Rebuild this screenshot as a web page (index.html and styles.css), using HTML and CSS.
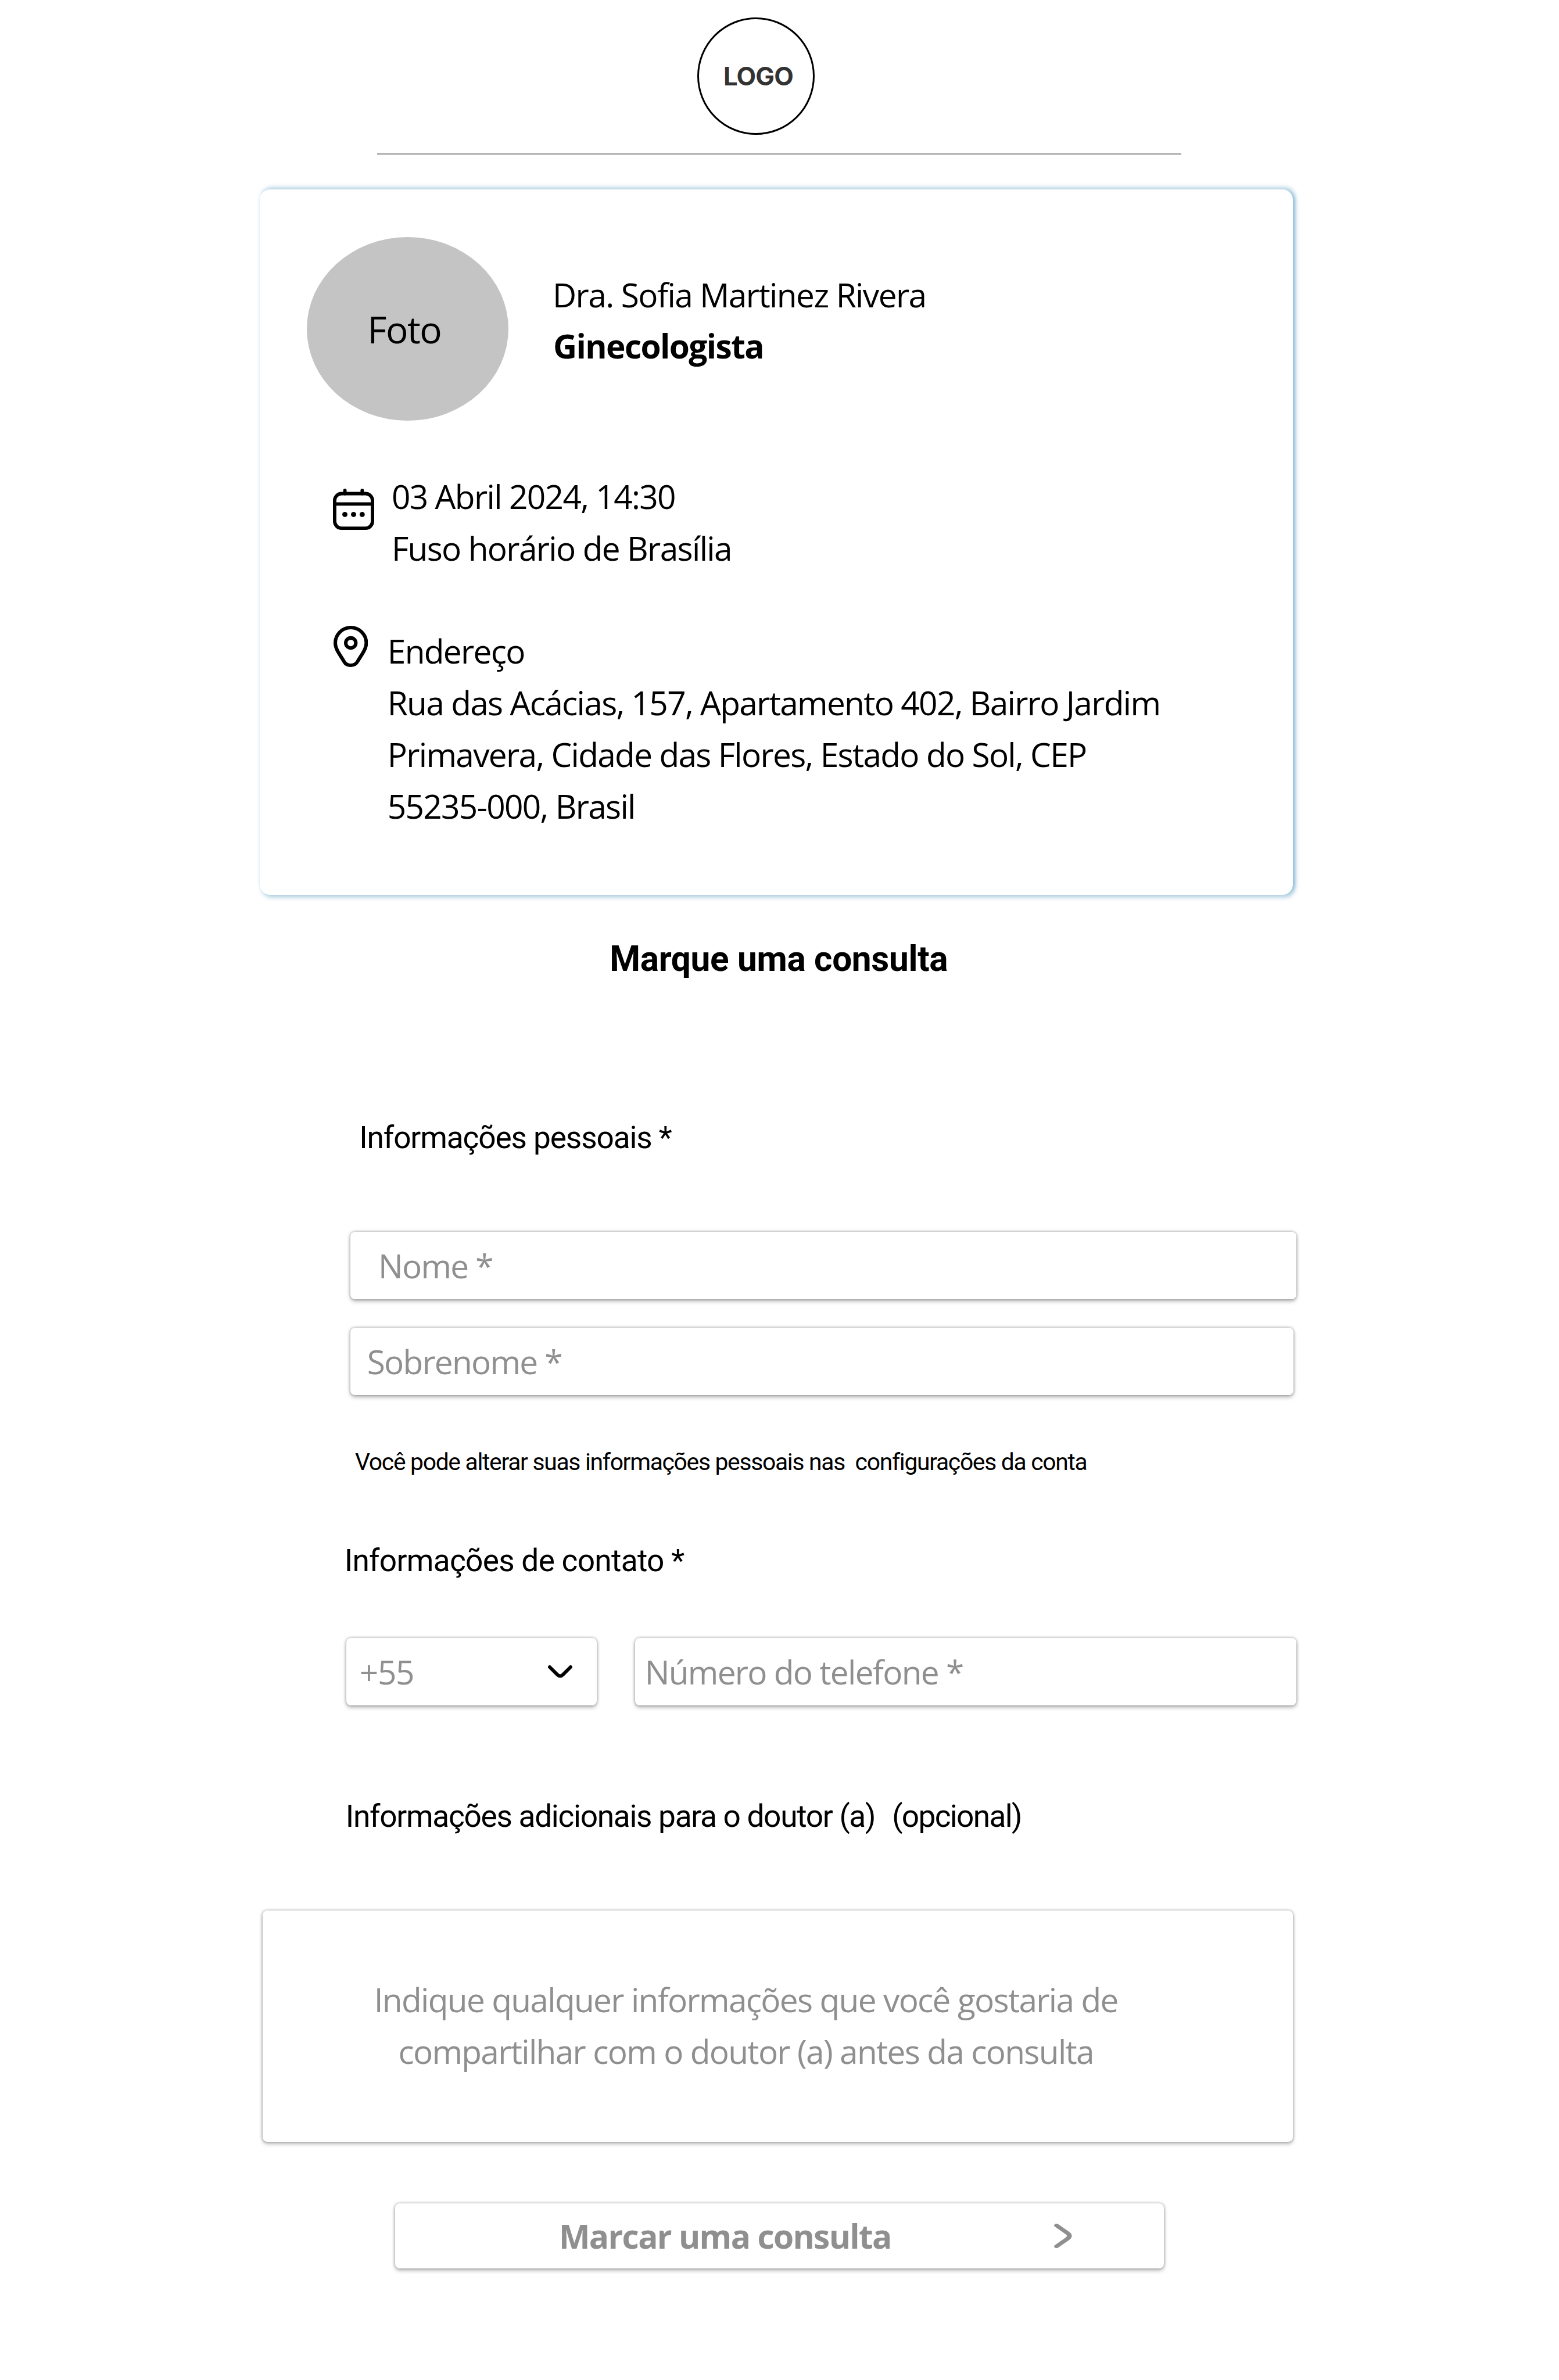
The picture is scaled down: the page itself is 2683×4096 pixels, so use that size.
FILE: index.html
```html
<!DOCTYPE html>
<html lang="pt-BR">
<head>
<meta charset="utf-8">
<title>Marque uma consulta</title>
<link rel="stylesheet" href="styles.css">
</head>
<body>
<header class="header">
  <div class="logo">LOGO</div>
  <hr class="divider">
</header>

<main class="page">
  <section class="card">
    <div class="doctor">
      <div class="avatar">Foto</div>
      <div class="doctor-info">
        <p class="t-name">Dra. Sofia Martinez Rivera</p>
        <p class="t-role">Ginecologista</p>
      </div>
    </div>
    <div class="detail detail-date">
      <svg class="icon-calendar" viewBox="0 0 80 80" fill="none" stroke="#000" stroke-width="6.6" stroke-linecap="round">
        <rect x="3.3" y="9.6" width="73.4" height="67.1" rx="13.5"/>
        <path d="M3.3 29.7H76.7M23.2 3.3V9.6M56.7 3.3V9.6"/>
        <g fill="#000" stroke="none"><circle cx="23.1" cy="50" r="5"/><circle cx="40" cy="50" r="5"/><circle cx="56.7" cy="50" r="5"/></g>
      </svg>
      <div>
        <p class="t-date">03 Abril 2024, 14:30</p>
        <p class="t-zone">Fuso horário de Brasília</p>
      </div>
    </div>
    <div class="detail detail-address">
      <svg class="icon-pin" viewBox="0 0 67 80" fill="none" stroke="#000" stroke-width="6.8">
        <path d="M33.5 3.4C16.9 3.4 3.4 16.8 3.4 33.4C3.4 46 14 58 20.5 69.5C23 74 27.5 76.6 33.5 76.6C39.5 76.6 44 74 46.5 69.5C53 58 63.6 46 63.6 33.4C63.6 16.8 50.1 3.4 33.5 3.4Z"/>
        <circle cx="33.5" cy="33.3" r="9.8"/>
      </svg>
      <address class="address">
        <p>Endereço</p>
        <p>Rua das Acácias, 157, Apartamento 402, Bairro Jardim</p>
        <p>Primavera, Cidade das Flores, Estado do Sol, CEP</p>
        <p>55235-000, Brasil</p>
      </address>
    </div>
  </section>

  <h1 class="title">Marque uma consulta</h1>

  <h2 class="section section-personal">Informações pessoais *</h2>
  <div class="field field-name">Nome *</div>
  <div class="field field-surname">Sobrenome *</div>
  <p class="note">Você pode alterar suas informações pessoais nas&nbsp; configurações da conta</p>

  <h2 class="section section-contact">Informações de contato *</h2>
  <div class="phone-row">
    <div class="field field-code">
      <span>+55</span>
      <svg class="icon-down" viewBox="0 0 47.4 24.3" fill="none" stroke="#000" stroke-width="6.7" stroke-linecap="round"><path d="M3.4 3.4L18 18Q23.7 23.7 29.4 18L44 3.4"/></svg>
    </div>
    <div class="field field-phone">Número do telefone *</div>
  </div>

  <h2 class="section section-extra"><span>Informações adicionais para o doutor (a)</span><span class="optional">(opcional)</span></h2>
  <div class="field textarea">
    <p>Indique qualquer informações que você gostaria de</p>
    <p>compartilhar com o doutor (a) antes da consulta</p>
  </div>

  <div class="field submit">
    <span>Marcar uma consulta</span>
    <svg class="icon-next" viewBox="0 0 24.3 47.4" preserveAspectRatio="none" fill="none" stroke="#8f8f8f" stroke-width="6.7" stroke-linecap="round"><path d="M3.4 3.4L18 18Q23.7 23.7 18 29.4L3.4 44"/></svg>
  </div>
</main>
</body>
</html>
```
FILE: styles.css
```css
* { box-sizing: border-box; margin: 0; padding: 0; }

body {
  min-height: 4096px;
  background: #fff;
  color: #000;
  font: 400 56.78px/88.73px "Open Sans", "Noto Sans", sans-serif;
  letter-spacing: -0.029em;
  white-space: nowrap;
}

/* Header */
.header { padding-top: 30px; height: 266.5px; }
.logo {
  display: flex;
  align-items: center;
  justify-content: center;
  width: 202px;
  height: 202px;
  margin-left: 1200px;
  padding: 2px 0 0 8px;
  border: 3.5px solid #000;
  border-radius: 50%;
  color: #333;
  font: 700 43.6px/52px Inter, sans-serif;
  letter-spacing: -0.02em;
}
.divider {
  width: 1384px;
  height: 2px;
  margin: 32px 0 0 649px;
  border: 0;
  background: #959595;
}

.page { display: flex; flex-direction: column; align-items: flex-start; }

/* Doctor card */
.card {
  width: 1778px;
  height: 1214px;
  margin: 59.5px 0 0 447.2px;
  padding: 82px 0 0 80.8px;
  border-radius: 18px;
  background: #fff;
  box-shadow: 3.5px 4.5px 7px rgba(0, 107, 166, .28), 3.5px -3.5px 7px rgba(0, 107, 166, .28);
}
.doctor { display: flex; gap: 76px; }
.avatar {
  width: 347px;
  height: 316px;
  padding-left: 104.6px;
  border-radius: 50%;
  background: #c4c4c4;
  font-size: 64px;
  line-height: 317px;
  letter-spacing: -0.024em;
}
.doctor-info { padding-top: 54.5px; }
.t-name { letter-spacing: -0.0276em; }
.t-role { font-weight: 700; letter-spacing: -0.028em; text-indent: 1px; }
.detail { display: flex; align-items: flex-start; padding-left: 45.1px; }
.detail-date { gap: 29.8px; margin-top: 86.2px; }
.detail-address { gap: 33.8px; margin-top: 88.8px; padding-left: 45.6px; }
.icon-calendar { width: 71px; height: 71px; margin-top: 30.8px; }
.icon-pin { width: 59.4px; height: 71px; margin-top: 0.5px; }
.address { font-style: normal; letter-spacing: -0.0296em; }

/* Headings */
.title, .section, .note { font-family: Roboto, sans-serif; }
.title {
  margin: 70.9px 0 0 1049.2px;
  font-size: 60.3px;
  line-height: 80px;
  font-weight: 700;
  letter-spacing: -0.005em;
}
.section { font-size: 53.2px; line-height: 70px; font-weight: 400; }
.section-personal { margin: 232.5px 0 0 618.2px; letter-spacing: -0.0211em; }
.section-contact { margin: 104.8px 0 0 592.7px; letter-spacing: -0.0135em; }
.section-extra { display: flex; gap: 29px; margin: 156.4px 0 0 594.8px; letter-spacing: -0.0244em; }
.optional { letter-spacing: -0.031em; }
.note {
  margin: 85.1px 0 0 611.1px;
  font-size: 40.8px;
  line-height: 60px;
  letter-spacing: -0.0317em;
}

/* Form fields */
.field {
  display: flex;
  align-items: center;
  height: 115.8px;
  border-radius: 8px;
  background: #fff;
  color: #8f8f8f;
  letter-spacing: -0.031em;
  box-shadow: 0 3.5px 7px rgba(0, 0, 0, .24), 0 0 5px rgba(0, 0, 0, .34);
}
.field-name { width: 1628px; margin: 126.6px 0 0 603.2px; padding-left: 47.9px; }
.field-surname { width: 1622.6px; margin: 49.3px 0 0 603.2px; padding-left: 28.5px; }
.phone-row { display: flex; gap: 66px; margin: 98.6px 0 0 595.9px; }
.phone-row .field { height: 115.4px; }
.field-code {
  justify-content: space-between;
  width: 431.2px;
  padding: 0 42.5px 0 22.8px;
}
.field-code span { letter-spacing: -0.022em; }
.icon-down { width: 42px; height: 21.5px; }
.field-phone { width: 1138px; padding-left: 16.6px; letter-spacing: -0.03em; }

.textarea {
  flex-direction: column;
  width: 1772.8px;
  height: 398px;
  margin: 126.4px 0 0 452.3px;
  padding: 109.9px 110px 0 0;
  letter-spacing: -0.0295em;
}

.submit {
  justify-content: space-between;
  width: 1322.9px;
  height: 112.3px;
  margin: 106px 0 0 680.3px;
  padding: 1px 158.2px 0 281.7px;
  font-weight: 700;
  letter-spacing: -0.0292em;
}
.icon-next { width: 30.7px; height: 42px; }
```
